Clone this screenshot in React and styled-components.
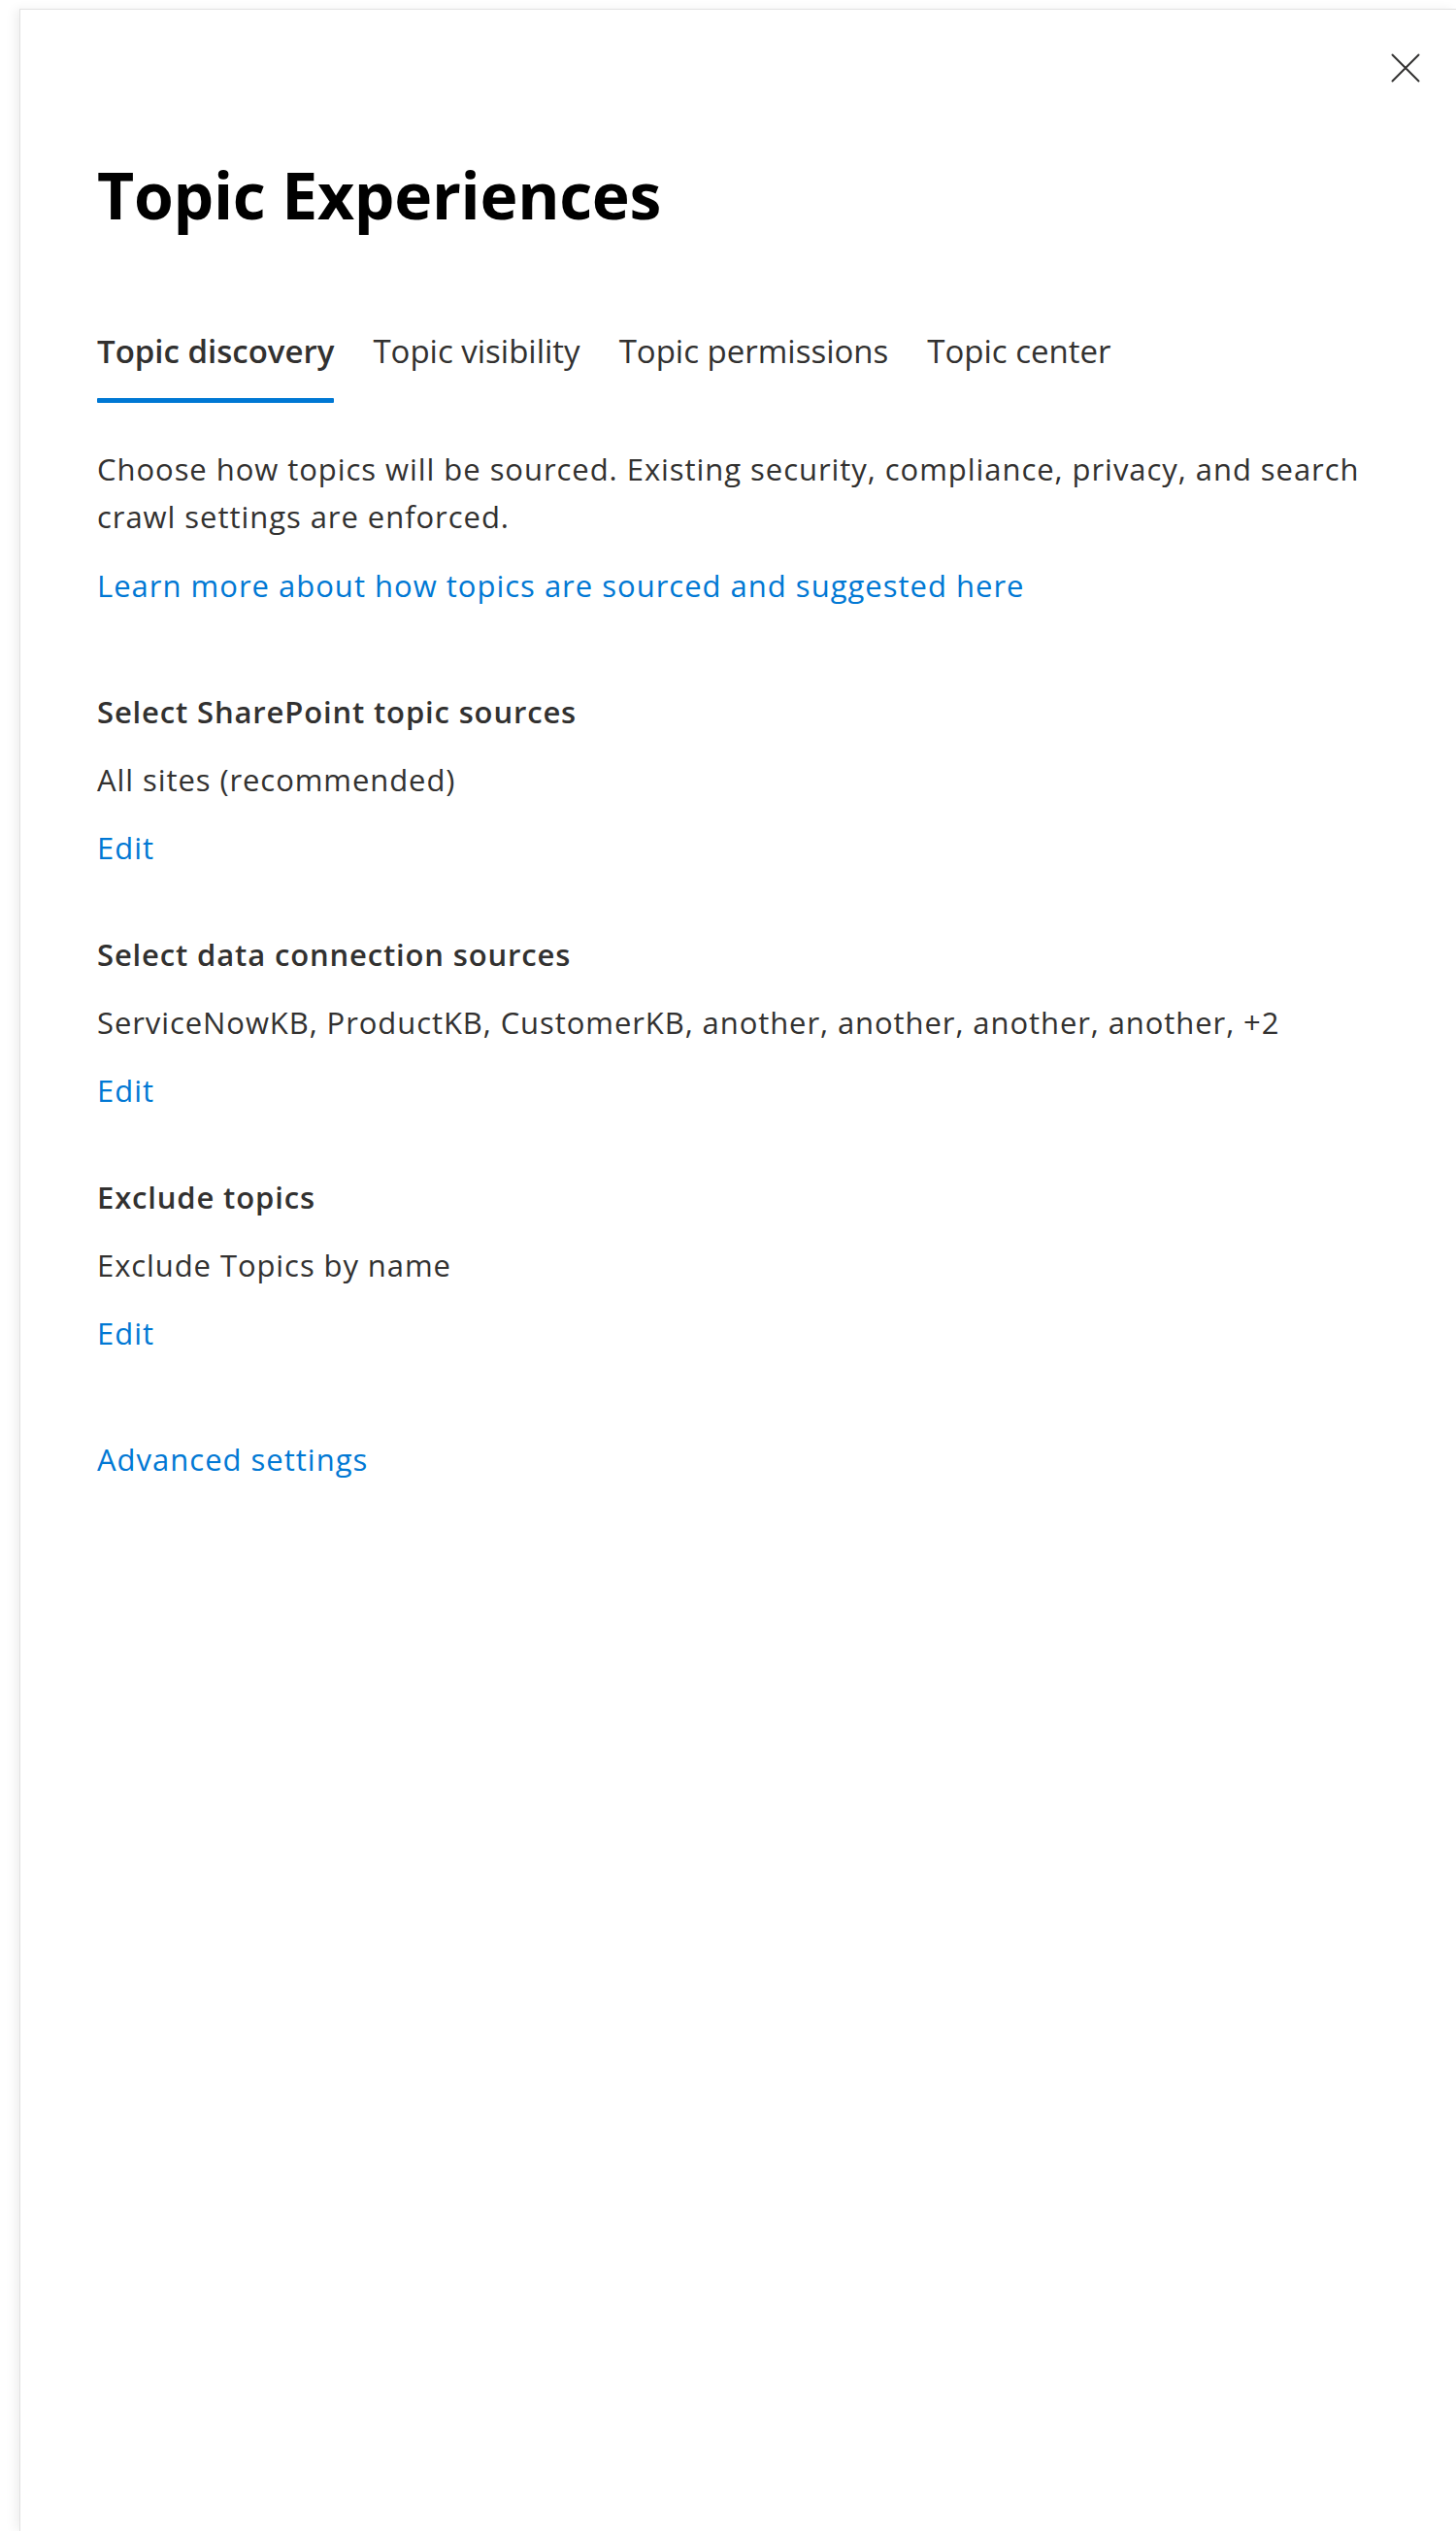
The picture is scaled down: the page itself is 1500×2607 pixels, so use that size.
import React, { useState } from "react";
import styled, { createGlobalStyle } from "styled-components";

const Global = createGlobalStyle`
  html, body {
    margin: 0;
    padding: 0;
    background: #ffffff;
  }
  body {
    font-family: "Open Sans", "Noto Sans", "Liberation Sans", sans-serif;
    -webkit-font-smoothing: antialiased;
  }
  * { box-sizing: border-box; }
`;

const Backdrop = styled.div`
  min-height: 100vh;
  height: 100vh;
  padding: 9px 0 0 20px;
  display: flex;
  background: #ffffff;
  overflow: hidden;
`;

const Panel = styled.section`
  position: relative;
  flex: 1;
  background: #ffffff;
  border-top: 1px solid #e1e1e1;
  border-left: 1px solid #e1e1e1;
  box-shadow: -5px 0 10px rgba(0, 0, 0, 0.06);
  padding: 145px 40px 0 79px;
  display: flex;
  flex-direction: column;
  align-items: flex-start;
`;

const CloseButton = styled.button`
  position: absolute;
  top: 45px;
  right: 37px;
  width: 30px;
  height: 30px;
  padding: 0;
  border: none;
  background: transparent;
  color: #323130;
  cursor: pointer;
  display: flex;
  svg { display: block; }
`;

const Title = styled.h1`
  margin: 0;
  font-size: 66px;
  line-height: 90px;
  font-weight: 700;
  color: #000000;
  letter-spacing: -0.3px;
`;

const TabList = styled.div`
  margin-top: 92px;
  display: flex;
  gap: 40px;
`;

const Tab = styled.button`
  padding: 0;
  border: none;
  background: transparent;
  font-family: inherit;
  font-size: 33px;
  line-height: 50px;
  font-weight: ${(p) => (p.$active ? 600 : 400)};
  color: #323130;
  cursor: pointer;
  display: flex;
  flex-direction: column;
  align-items: stretch;
`;

const TabBar = styled.span`
  display: block;
  margin-top: 23px;
  height: 5px;
  border-radius: 1px;
  background: ${(p) => (p.$active ? "#0078d4" : "transparent")};
`;

const Description = styled.p`
  margin: 44px 0 0;
  font-size: 31px;
  line-height: 49px;
  letter-spacing: 0.95px;
  color: #323130;
`;

const Link = styled.a`
  display: block;
  font-size: 31px;
  line-height: 49px;
  letter-spacing: 1px;
  color: #0078d4;
  text-decoration: none;
  cursor: pointer;
  margin-top: ${(p) => p.$mt || 0}px;
`;

const Sections = styled.div`
  margin-top: 81px;
  display: flex;
  flex-direction: column;
  gap: 61px;
`;

const Section = styled.div`
  display: flex;
  flex-direction: column;
  gap: 21px;
`;

const SectionHeading = styled.h3`
  margin: 0;
  font-size: 31px;
  line-height: 49px;
  font-weight: 600;
  letter-spacing: 0.85px;
  color: #323130;
`;

const SectionValue = styled.div`
  font-size: 31px;
  line-height: 49px;
  letter-spacing: 0.92px;
  color: #323130;
`;

const sections = [
  { title: "Select SharePoint topic sources", value: "All sites (recommended)" },
  {
    title: "Select data connection sources",
    value:
      "ServiceNowKB, ProductKB, CustomerKB, another, another, another, another, +2",
  },
  { title: "Exclude topics", value: "Exclude Topics by name" },
];

const tabs = [
  "Topic discovery",
  "Topic visibility",
  "Topic permissions",
  "Topic center",
];

export default function App() {
  const [active, setActive] = useState(0);
  return (
    <>
      <Global />
      <Backdrop>
        <Panel>
          <CloseButton aria-label="Close">
            <svg width="30" height="30" viewBox="0 0 30 30" fill="none">
              <path
                d="M1.5 1.5 L28.5 28.5 M28.5 1.5 L1.5 28.5"
                stroke="currentColor"
                strokeWidth="2"
                strokeLinecap="round"
              />
            </svg>
          </CloseButton>
          <Title>Topic Experiences</Title>
          <TabList role="tablist">
            {tabs.map((t, i) => (
              <Tab
                key={t}
                role="tab"
                $active={i === active}
                onClick={() => setActive(i)}
              >
                {t}
                <TabBar $active={i === active} />
              </Tab>
            ))}
          </TabList>
          <Description>
            Choose how topics will be sourced. Existing security, compliance,
            privacy, and search crawl settings are enforced.
          </Description>
          <Link $mt={22}>
            Learn more about how topics are sourced and suggested here
          </Link>
          <Sections>
            {sections.map((s) => (
              <Section key={s.title}>
                <SectionHeading>{s.title}</SectionHeading>
                <SectionValue>{s.value}</SectionValue>
                <Link>Edit</Link>
              </Section>
            ))}
          </Sections>
          <Link $mt={81}>Advanced settings</Link>
        </Panel>
      </Backdrop>
    </>
  );
}
